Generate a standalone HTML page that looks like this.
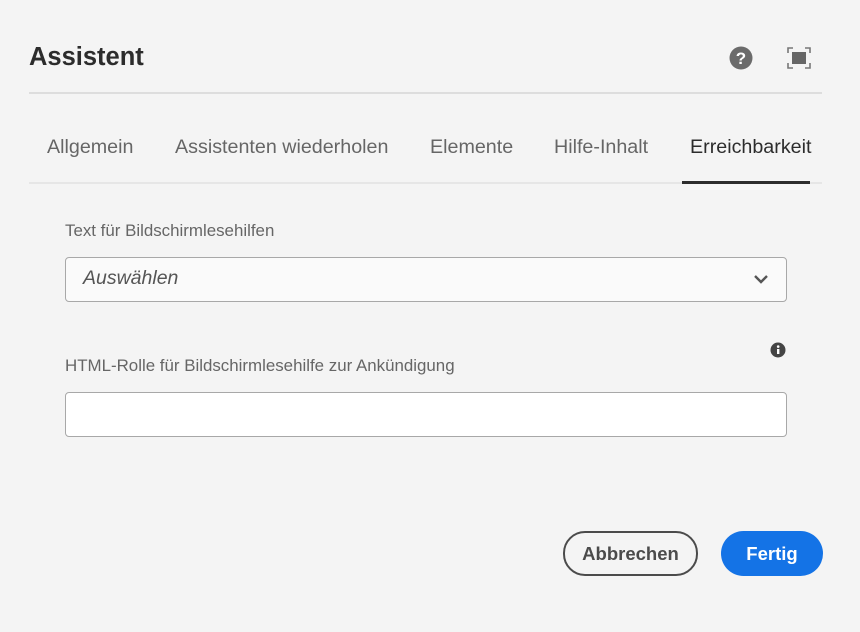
<!DOCTYPE html>
<html><head><style>
body{margin:0;width:860px;height:632px;background:#f4f4f4;font-family:"Liberation Sans",sans-serif;position:relative;overflow:hidden}
.a{position:absolute}
.tab{position:absolute;top:136px;font-size:19.7px;color:#666}
</style></head><body>
<div class="a" style="left:29px;top:43px;font-size:25.5px;font-weight:bold;color:#2c2c2c">Assistent</div>
<svg class="a" style="left:729px;top:46px" width="24" height="24" viewBox="0 0 24 24"><circle cx="12" cy="12" r="11.5" fill="#6b6b6b"/><text x="12" y="18" text-anchor="middle" font-family="Liberation Sans" font-weight="bold" font-size="17" fill="#fff">?</text></svg>
<svg class="a" style="left:787px;top:47px" width="24" height="22" viewBox="0 0 24 22"><g fill="none" stroke="#777" stroke-width="1.6"><path d="M1 6V1h5M18 1h5v5M23 16v5h-5M6 21H1v-5"/></g><rect x="5" y="5" width="14" height="12" fill="#666"/></svg>
<div class="a" style="left:29px;top:92px;width:793px;height:2px;background:#ddd"></div>
<div class="tab" style="left:47px">Allgemein</div>
<div class="tab" style="left:175px">Assistenten wiederholen</div>
<div class="tab" style="left:430px">Elemente</div>
<div class="tab" style="left:554px">Hilfe-Inhalt</div>
<div class="tab" style="left:690px;color:#2c2c2c">Erreichbarkeit</div>
<div class="a" style="left:29px;top:182px;width:793px;height:2px;background:#e6e6e6"></div>
<div class="a" style="left:682px;top:181px;width:128px;height:3px;background:#2c2c2c"></div>
<div class="a" style="left:65px;top:221px;font-size:16.9px;color:#666">Text für Bildschirmlesehilfen</div>
<div class="a" style="left:65px;top:257px;width:720px;height:43px;border:1px solid #a8a8a8;border-radius:4px;background:#fafafa"></div>
<div class="a" style="left:83px;top:267px;font-size:19.5px;font-style:italic;color:#555">Auswählen</div>
<svg class="a" style="left:753px;top:273px" width="16" height="12" viewBox="0 0 16 12"><path d="M2 3l6 6 6-6" fill="none" stroke="#555" stroke-width="2.4"/></svg>
<svg class="a" style="left:770px;top:342px" width="16" height="16" viewBox="0 0 16 16"><circle cx="8" cy="8" r="7.5" fill="#444"/><rect x="7" y="7" width="2.4" height="5" fill="#fff"/><circle cx="8.2" cy="4.6" r="1.3" fill="#fff"/></svg>
<div class="a" style="left:65px;top:356px;font-size:16.9px;color:#666">HTML-Rolle für Bildschirmlesehilfe zur Ankündigung</div>
<div class="a" style="left:65px;top:392px;width:720px;height:43px;border:1px solid #a8a8a8;border-radius:4px;background:#fff"></div>
<div class="a" style="left:563px;top:531px;width:131px;height:41px;border:2px solid #4b4b4b;border-radius:22px;text-align:center;line-height:41px;font-size:18.5px;font-weight:bold;color:#4b4b4b">Abbrechen</div>
<div class="a" style="left:721px;top:531px;width:102px;height:45px;background:#1473e6;border-radius:23px;text-align:center;line-height:45px;font-size:18.5px;font-weight:bold;color:#fff">Fertig</div>
</body></html>
